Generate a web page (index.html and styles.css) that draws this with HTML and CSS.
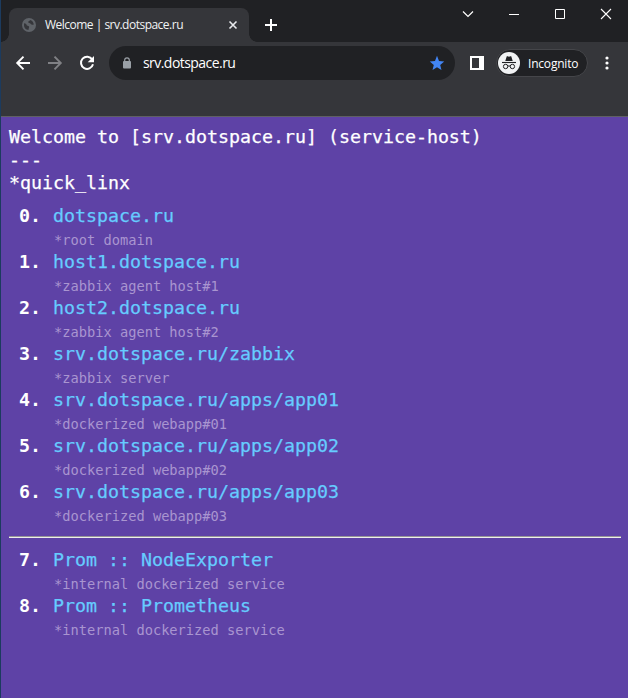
FILE: index.html
```html
<!DOCTYPE html>
<html lang="en">
<head>
<meta charset="utf-8">
<title>Welcome | srv.dotspace.ru</title>
<link rel="stylesheet" href="styles.css">
</head>
<body>
<div class="window">
  <header class="tabstrip">
    <div class="corner"></div>
    <div class="tab">
      <svg class="globe" width="14" height="14" viewBox="0 0 14 14"><circle cx="7" cy="7" r="7" fill="#5f6368"/><path d="M2 5.2c1.600.1 2.400.7 2.600 1.800.2 1 1.800.7 2.400 1.600.5.8-.5 1.400-.3 3.200C4 12 2 9.800 2 7zM8 2c-.2 1.200-1.800 1-1.800 2.100 0 1.300 1.800.6 2.400 1.700.5 1 1.900 1.200 3.200.7C11.600 4.400 10 2.400 8 2z" fill="#35363a"/></svg>
      <span class="tab-title">Welcome | srv.dotspace.ru</span>
      <svg class="tab-close" width="10" height="10" viewBox="0 0 10 10"><path d="M1.500 1.500l7 7M8.500 1.500l-7 7" stroke="#e8eaed" stroke-width="1.600"/></svg>
    </div>
    <div class="corner corner-right"></div>
    <svg class="plus" width="14" height="14" viewBox="0 0 14 14"><path d="M7 1v12M1 7h12" stroke="#fff" stroke-width="2"/></svg>
    <div class="controls">
      <svg width="12" height="12" viewBox="0 0 12 12"><path d="M1 3.500l5 5 5-5" fill="none" stroke="#fff" stroke-width="1.200"/></svg>
      <svg width="12" height="12" viewBox="0 0 12 12"><path d="M1 6.500h10" stroke="#fff"/></svg>
      <svg width="12" height="12" viewBox="0 0 12 12"><path d="M1.500 1.500h9v9h-9z" fill="none" stroke="#fff"/></svg>
      <svg width="12" height="12" viewBox="0 0 12 12"><path d="M1 1l10 10M11 1L1 11" stroke="#fff" stroke-width="1.100"/></svg>
    </div>
  </header>
  <nav class="toolbar">
    <svg class="nav-icon" width="16" height="16" viewBox="0 0 16 16"><path d="M15 8H2.500M8.500 1.700L2.200 8l6.300 6.300" fill="none" stroke="#fff" stroke-width="1.900"/></svg>
    <svg class="nav-icon" width="16" height="16" viewBox="0 0 16 16"><path d="M1 8h12.500M7.500 1.700L13.800 8l-6.300 6.300" fill="none" stroke="#808185" stroke-width="1.900"/></svg>
    <svg class="nav-icon" width="16" height="16" viewBox="0 0 16 16"><path d="M13.200 4.400A6.100 6.100 0 1 0 14 9.300" fill="none" stroke="#fff" stroke-width="2"/><path d="M15 1v6.300H8.700z" fill="#fff"/></svg>
    <div class="omnibox">
      <svg class="lock" width="10" height="12" viewBox="0 0 10 12"><path d="M2.700 5V3.100a2.300 2.300 0 0 1 4.600 0V5" fill="none" stroke="#9aa0a6" stroke-width="1.200"/><rect x="1" y="4" width="8" height="7.500" rx="1" fill="#9aa0a6"/></svg>
      <span class="address">srv.dotspace.ru</span>
      <svg class="star" width="16" height="16" viewBox="0 0 16 16"><path d="M8 .8l2 5.200 5.200.4-4 3.500 1.300 5.100L8 12.200 3.500 15l1.300-5.100L.8 6.400 6 6z" fill="#4285f4"/></svg>
    </div>
    <svg class="panel" width="14" height="14" viewBox="0 0 14 14"><path fill-rule="evenodd" d="M0 0h14v14H0zM2 2v10h7V2z" fill="#fff"/></svg>
    <div class="incognito">
      <svg width="22" height="22" viewBox="0 0 22 22"><circle cx="11" cy="11" r="11" fill="#f1f3f4"/><path d="M7.300 9l1.300-4.300c.2-.6.7-.6 1-.4l1.400.5 1.400-.5c.4-.2.8-.2 1 .4L14.700 9z" fill="#202124"/><path d="M4 10.500h14" stroke="#202124" stroke-width="1.100"/><g fill="none" stroke="#202124"><circle cx="7.600" cy="14.500" r="2.200"/><circle cx="14.400" cy="14.500" r="2.200"/><path d="M9.800 14.200q1.200-.7 2.400 0"/></g></svg>
      <span>Incognito</span>
    </div>
    <svg class="menu" width="4" height="14" viewBox="0 0 4 14"><g fill="#fff"><circle cx="2" cy="2" r="1.600"/><circle cx="2" cy="7" r="1.600"/><circle cx="2" cy="12" r="1.600"/></g></svg>
  </nav>
  <main class="page">
    <div class="intro">Welcome to [srv.dotspace.ru] (service-host)<br>---<br>*quick_linx</div>
    <ol class="links">
      <li><b>0.</b><a>dotspace.ru</a><small>*root domain</small></li>
      <li><b>1.</b><a>host1.dotspace.ru</a><small>*zabbix agent host#1</small></li>
      <li><b>2.</b><a>host2.dotspace.ru</a><small>*zabbix agent host#2</small></li>
      <li><b>3.</b><a>srv.dotspace.ru/zabbix</a><small>*zabbix server</small></li>
      <li><b>4.</b><a>srv.dotspace.ru/apps/app01</a><small>*dockerized webapp#01</small></li>
      <li><b>5.</b><a>srv.dotspace.ru/apps/app02</a><small>*dockerized webapp#02</small></li>
      <li><b>6.</b><a>srv.dotspace.ru/apps/app03</a><small>*dockerized webapp#03</small></li>
    </ol>
    <hr>
    <ol class="links">
      <li><b>7.</b><a>Prom :: NodeExporter</a><small>*internal dockerized service</small></li>
      <li><b>8.</b><a>Prom :: Prometheus</a><small>*internal dockerized service</small></li>
    </ol>
  </main>
</div>
</body>
</html>
```
FILE: styles.css
```css
* { box-sizing: border-box; }
body { margin: 0; background: #5e42a6; overflow: hidden; }
svg { display: block; flex: none; }
.window {
  height: 698px;
  border-left: 1px solid #1c3b5e;
  display: flex;
  flex-direction: column;
  font-family: "Open Sans", "Noto Sans", sans-serif;
  color: #fff;
}
.tabstrip { height: 42px; background: #202124; display: flex; align-items: flex-end; flex: none; }
.corner { width: 8px; height: 8px; background: radial-gradient(circle at 0 0, #202124 7.5px, #35363a 8px); }
.corner-right { background: radial-gradient(circle at 100% 0, #202124 7.5px, #35363a 8px); }
.tab {
  width: 240px;
  height: 34px;
  background: #35363a;
  border-radius: 8px 8px 0 0;
  display: flex;
  align-items: center;
  padding: 0 11px 0 13px;
}
.tab-title { font-size: 12px; letter-spacing: -0.51px; margin: -1px 0 0 9px; white-space: nowrap; color: #f1f3f4; }
.tab-close { margin-left: auto; }
.plus { margin: 0 0 10px 7px; }
.controls { margin-left: auto; display: flex; gap: 34px; padding-right: 16px; align-self: flex-start; padding-top: 8px; }
.toolbar {
  height: 75px;
  flex: none;
  background: #35363a;
  border-bottom: 1px solid #5f6063;
  display: flex;
  align-items: flex-start;
  padding: 4px 19px 0 14px;
}
.nav-icon { margin: 9px 16px 0 0; }
.omnibox {
  width: 346px;
  height: 34px;
  margin-left: -2px;
  border-radius: 17px;
  background: #202124;
  display: flex;
  align-items: center;
  padding: 0 10px 0 13px;
}
.address { font-size: 14px; letter-spacing: -0.55px; margin: -1px 0 0 11px; }
.star { margin-left: auto; }
.panel { margin: 10px 0 0 15px; }
.incognito {
  width: 92px;
  height: 28px;
  margin: 3px 0 0 12px;
  border: 1px solid #45464a;
  border-radius: 14px;
  background: #202124;
  display: flex;
  align-items: center;
  padding-left: 1px;
  gap: 8px;
  font-size: 12px;
  letter-spacing: -0.2px;
}
.menu { margin: 10px 0 0 auto; }
.page {
  flex: 1;
  background: #5e42a6;
  padding: 8px 7px 0 8px;
  font: 18.27px/23px "DejaVu Sans Mono", "Liberation Mono", monospace;
}
.intro { white-space: pre; }
.intro, .links a { -webkit-text-stroke: 0.25px currentColor; }
.links { list-style: none; margin: 10px 0 0; padding: 0; }
.links li { display: grid; grid-template-columns: 44px 1fr; grid-template-rows: 23px 23px; }
.links b { padding-left: 10px; }
.links a { color: #66ccff; white-space: pre; }
.links small { grid-column: 2; font-size: 13.7px; color: #a995d0; padding: 2px 0 0 1px; }
hr { height: 2px; margin: 10px 0 0; border: 0; border-top: 1px solid #969696; background: #eee; }
```
